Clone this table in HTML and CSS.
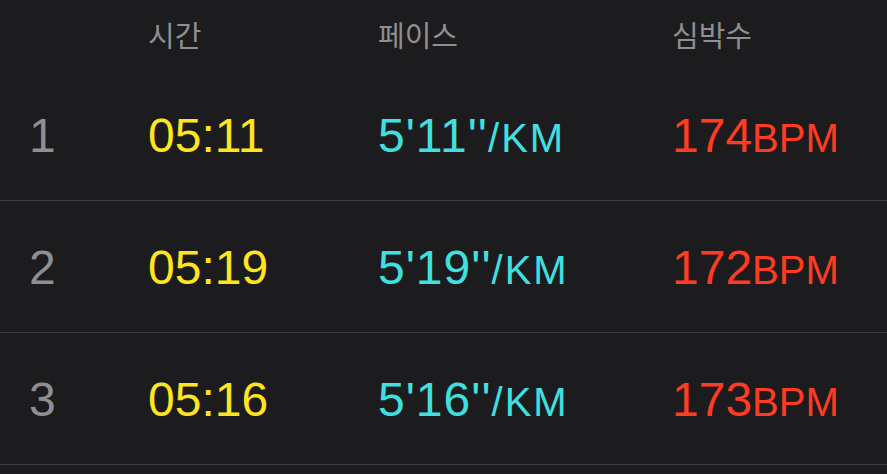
FILE: index.html
```html
<!DOCTYPE html>
<html lang="ko">
	<head>
		<meta charset="utf-8" />
		<title>구간</title>
		<link rel="stylesheet" href="styles.css">
	</head>
	<body>
		<div class="splits">
			<div class="head">
				<span></span>
				<span>시간</span>
				<span>페이스</span>
				<span>심박수</span>
			</div>
			<div class="row">
				<span class="num">1</span>
				<span class="time">05:11</span>
				<span class="pace">5'11''<small>/KM</small></span>
				<span class="hr">174<small>BPM</small></span>
			</div>
			<div class="row">
				<span class="num">2</span>
				<span class="time">05:19</span>
				<span class="pace">5'19''<small>/KM</small></span>
				<span class="hr">172<small>BPM</small></span>
			</div>
			<div class="row">
				<span class="num">3</span>
				<span class="time">05:16</span>
				<span class="pace">5'16''<small>/KM</small></span>
				<span class="hr">173<small>BPM</small></span>
			</div>
		</div>
	</body>
</html>
```

FILE: styles.css
```css
html, body{
	margin: 0;
	background: #1c1c1e;
}
.splits{
	width: 887px;
	height: 474px;
	overflow: hidden;
	font-family: "Liberation Sans", "Noto Sans CJK KR", sans-serif;
}
.head, .row{
	display: grid;
	grid-template-columns: 120px 230px 294px 1fr;
	padding-left: 28px;
	align-items: center;
}
.head{
	height: 69px;
	font-family: "Noto Sans CJK KR", sans-serif;
	font-size: 29px;
	color: #8e8e93;
}
.head span{
	margin-top: -2px;
}
.row{
	height: 131px;
	border-bottom: 1px solid #3a3a3c;
	font-size: 48px;
}
.row span{
	line-height: 1;
	margin-top: 2px;
}
.row small{
	font-size: 40px;
}
.num{
	color: #8e8e93;
	margin-left: 1px;
}
.time{
	color: #ffe41e;
}
.pace{
	color: #40e0e0;
	letter-spacing: 1px;
}
.pace small{
	letter-spacing: 2px;
}
.hr{
	color: #ff3b22;
}
```
